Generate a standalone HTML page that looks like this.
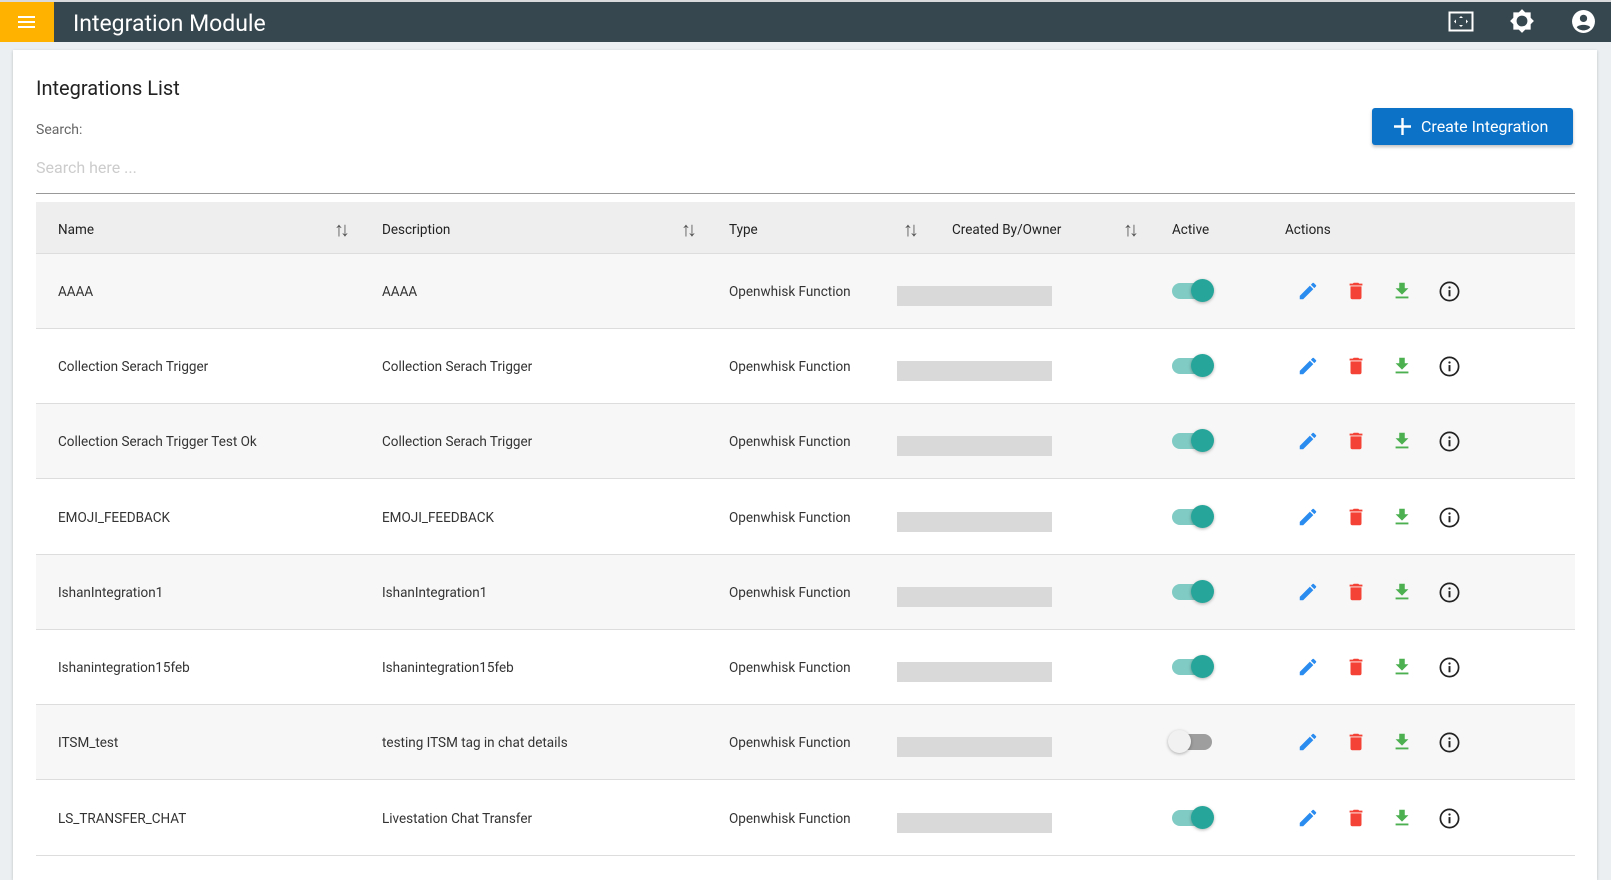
<!DOCTYPE html>
<html><head><meta charset="utf-8"><style>
*{box-sizing:border-box;margin:0;padding:0}
body{width:1611px;height:868px;overflow:hidden;background:#eceff1;font-family:"Roboto","Liberation Sans",sans-serif;position:relative;color:#333}
.top{position:absolute;left:0;top:0;width:1611px;height:2px;background:#d8dadb}
.hdr{position:absolute;left:0;top:2px;width:1611px;height:40px;background:#37474f}
.burger{position:absolute;left:0;top:2px;width:54px;height:40px;background:#ffb300}
.burger i{position:absolute;left:18px;width:17px;height:2px;background:#fff}
.title{position:absolute;left:73px;top:10px;color:#fff;font-size:23px}
.card{position:absolute;left:13px;top:50px;width:1584px;height:830px;background:#fff;box-shadow:0 1px 3px rgba(0,0,0,.2)}
.abs{position:absolute}
.th{position:absolute;top:222px;font-size:13.5px;color:#222}
.sort{position:absolute;top:217px;font-size:20px;color:#555;letter-spacing:-4px;font-weight:300}
.row{position:absolute;left:36px;width:1539px;height:75px;border-bottom:1px solid #ddd}
.c{position:absolute;top:30px;font-size:13.5px;color:#333}
.bar{position:absolute;left:861px;top:32px;width:155px;height:20px;background:#d9d9d9}
.tg{position:absolute;left:1136px;top:29px;width:40px;height:16px;border-radius:8px;background:#80cbc4}
.tg b{position:absolute;left:19px;top:-4px;width:23px;height:23px;border-radius:50%;background:#26a69a;box-shadow:0 1px 3px rgba(0,0,0,.3)}
.tg.off{background:#9e9e9e}
.tg.off b{left:-4px;background:#f1f1f1}
.ic{position:absolute;top:26px}
</style></head><body>
<div class="top"></div>
<div class="hdr"></div>
<div class="burger"><i style="top:14px"></i><i style="top:19px"></i><i style="top:24px"></i></div>
<div class="title">Integration Module</div>
<svg class="abs" style="left:1448px;top:10px" width="26" height="24" viewBox="0 0 26 24"><rect x="1.5" y="2.5" width="23" height="18" fill="none" stroke="#fff" stroke-width="2"/><path d="M13 6l-2 2h4zM13 17l-2-2h4zM6 11.5l2-2v4zM20 11.5l-2-2v4z" fill="#fff"/></svg>
<svg class="abs" style="left:1509px;top:8px" width="26" height="26" viewBox="0 0 24 24"><path fill="#fff" d="M12 1l3 3h5v5l3 3-3 3v5h-5l-3 3-3-3H4v-5l-3-3 3-3V4h5z"/><circle cx="12" cy="12" r="5" fill="#37474f"/></svg>
<svg class="abs" style="left:1571px;top:9px" width="25" height="25" viewBox="0 0 24 24"><circle cx="12" cy="12" r="11" fill="#fff"/><circle cx="12" cy="9" r="3.5" fill="#37474f"/><path d="M5.5 17.5c2-3 11-3 13 0c-1.5 2-4 3-6.5 3s-5-1-6.5-3z" fill="#37474f"/></svg>
<div class="card"></div>
<div class="abs" style="left:36px;top:76px;font-size:20px;color:#222">Integrations List</div>
<div class="abs" style="left:36px;top:122px;font-size:14px;color:#666">Search:</div>
<div class="abs" style="left:36px;top:158px;font-size:16px;color:#ccc">Search here ...</div>
<div class="abs" style="left:36px;top:193px;width:1539px;height:1px;background:#999"></div>
<div class="abs" style="left:1372px;top:108px;width:201px;height:37px;background:#0b72c8;border-radius:3px;box-shadow:0 2px 3px rgba(0,0,0,.25);color:#fff;font-size:16px"><svg style="position:absolute;left:22px;top:10px" width="17" height="17" viewBox="0 0 17 17"><path d="M8.5 0v17M0 8.5h17" stroke="#fff" stroke-width="2.4"/></svg><span style="position:absolute;left:49px;top:9px">Create Integration</span></div>
<div class="abs" style="left:36px;top:202px;width:1539px;height:52px;background:#eeeeee;border-bottom:1px solid #ddd"></div>
<div class="th" style="left:58px">Name</div><div class="sort" style="left:334px">↑↓</div>
<div class="th" style="left:382px">Description</div><div class="sort" style="left:681px">↑↓</div>
<div class="th" style="left:729px">Type</div><div class="sort" style="left:903px">↑↓</div>
<div class="th" style="left:952px">Created By/Owner</div><div class="sort" style="left:1123px">↑↓</div>
<div class="th" style="left:1172px">Active</div>
<div class="th" style="left:1285px">Actions</div>
<div id="rows"></div>
<script>
var d=[["AAAA","AAAA",1],["Collection Serach Trigger","Collection Serach Trigger",1],["Collection Serach Trigger Test Ok","Collection Serach Trigger",1],["EMOJI_FEEDBACK","EMOJI_FEEDBACK",1],["IshanIntegration1","IshanIntegration1",1],["Ishanintegration15feb","Ishanintegration15feb",1],["ITSM_test","testing ITSM tag in chat details",0],["LS_TRANSFER_CHAT","Livestation Chat Transfer",1]];
var tops=[254,329,404,480,555,630,705,781],h="";
d.forEach(function(r,i){
h+='<div class="row" style="top:'+tops[i]+'px;background:'+(i%2?'#fff':'#f7f7f7')+'"><div class="c" style="left:22px">'+r[0]+'</div><div class="c" style="left:346px">'+r[1]+'</div><div class="c" style="left:693px">Openwhisk Function</div><div class="bar"></div><div class="tg'+(r[2]?'':' off')+'"><b></b></div>'+
'<svg class="ic" style="left:1261px" width="22" height="22" viewBox="0 0 24 24"><path fill="#2b8cf0" d="M3 17.25V21h3.75L17.8 9.94l-3.75-3.75zM20.7 7.04a1 1 0 000-1.41l-2.34-2.34a1 1 0 00-1.41 0l-1.83 1.83 3.75 3.75z"/></svg>'+
'<svg class="ic" style="left:1309px" width="22" height="22" viewBox="0 0 24 24"><path fill="#f44336" d="M6 19a2 2 0 002 2h8a2 2 0 002-2V7H6zM19 4h-3.5l-1-1h-5l-1 1H5v2h14z"/></svg>'+
'<svg class="ic" style="left:1355px" width="22" height="22" viewBox="0 0 24 24"><path fill="#4caf50" d="M19 9h-4V3H9v6H5l7 7zM5 18v2h14v-2z"/></svg>'+
'<svg class="ic" style="left:1402px" width="23" height="23" viewBox="0 0 24 24"><circle cx="12" cy="12" r="9.5" fill="none" stroke="#222" stroke-width="1.8"/><rect x="11" y="10.5" width="2" height="6.5" fill="#222"/><circle cx="12" cy="7.8" r="1.2" fill="#222"/></svg></div>';});
document.getElementById('rows').innerHTML=h;
</script>
</body></html>
